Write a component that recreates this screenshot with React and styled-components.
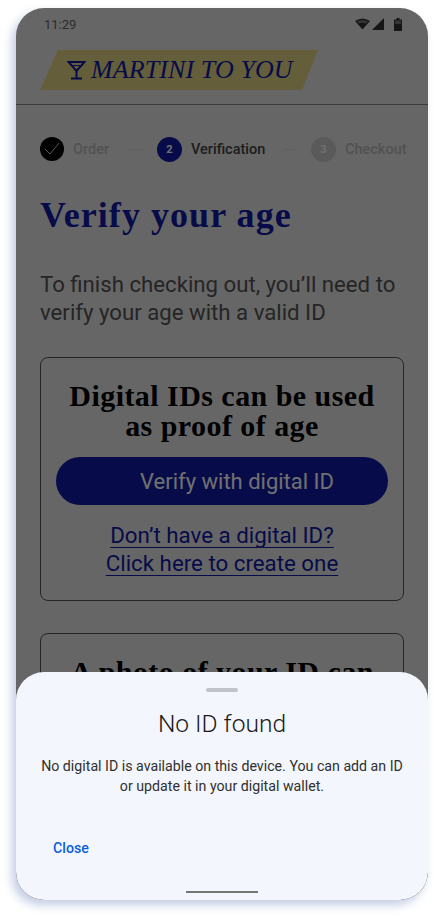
import React from 'react';
import styled, { createGlobalStyle } from 'styled-components';

const navy = '#101aa6';

const Global = createGlobalStyle`
  html, body { margin: 0; padding: 0; background: #fff; }
  body { font-family: Roboto, "Noto Sans", sans-serif; }
`;
const Page = styled.div`
  width: 436px;
  height: 916px;
  padding: 8px 0 0 16px;
  box-sizing: border-box;
  overflow: hidden;
`;
const Phone = styled.div`
  position: relative;
  width: 412px;
  height: 892px;
  border-radius: 28px;
  box-shadow: -4px 5px 10px rgba(70, 100, 170, 0.32);
`;
const Screen = styled.div`
  position: relative;
  width: 100%;
  height: 100%;
  border-radius: 28px;
  overflow: hidden;
  background: #e8e8e8;
`;
const StatusBar = styled.div`
  display: flex;
  align-items: center;
  justify-content: space-between;
  height: 32px;
  padding: 0 26px 0 28px;
  font-size: 13px;
  color: #666;
`;
const StatusIcons = styled.div`
  display: flex;
  align-items: center;
  gap: 2px;
`;
const BatteryIcon = styled.svg`
  margin-left: 8px;
`;
const Header = styled.header`
  height: 65px;
  padding: 10px 0 0 24px;
  box-sizing: border-box;
  border-bottom: 1px solid #8a8a8a;
`;
const Banner = styled.div`
  display: flex;
  align-items: center;
  gap: 5px;
  width: 278px;
  height: 40px;
  padding-left: 27px;
  box-sizing: border-box;
  background: #e3d584;
  clip-path: polygon(18px 0, 100% 0, 262px 100%, 0 100%);
`;
const BrandName = styled.span`
  font-family: "Liberation Serif", serif;
  font-style: italic;
  font-size: 26px;
  letter-spacing: 0.1px;
  color: ${navy};
  white-space: nowrap;
`;
const Steps = styled.div`
  display: flex;
  align-items: center;
  height: 26px;
  margin: 31px 0 0 24px;
`;
const StepCircle = styled.div`
  display: flex;
  align-items: center;
  justify-content: center;
  flex: none;
  width: ${(p) => p.$size || 25}px;
  height: ${(p) => p.$size || 25}px;
  border-radius: 50%;
  margin-right: 9px;
  font-size: 11px;
  font-weight: 700;
  color: #fff;
  background: ${(p) => p.$bg};
`;
const StepLabel = styled.span`
  flex: none;
  width: ${(p) => p.$w}px;
  font-size: 14.5px;
  font-weight: 500;
  color: ${(p) => p.$color};
  white-space: nowrap;
`;
const StepDash = styled.div`
  flex: none;
  width: 13px;
  height: 1px;
  background: #d8d8d8;
  margin-right: 15px;
`;
const Content = styled.main`
  padding: 0 24px;
`;
const Title = styled.h1`
  margin: 33px 0 0;
  font-family: "Liberation Serif", serif;
  font-weight: 700;
  font-size: 36px;
  line-height: 40px;
  letter-spacing: 1.05px;
  color: ${navy};
`;
const Lead = styled.p`
  margin: 35px 0 0;
  font-size: 22.2px;
  line-height: 28px;
  color: #555;
`;
const Card = styled.section`
  border: 1px solid #555;
  border-radius: 8px;
  padding: 23px 15px 0;
  margin-top: ${(p) => p.$mt}px;
  height: ${(p) => p.$h}px;
  box-sizing: border-box;
  text-align: center;
`;
const CardTitle = styled.h2`
  margin: 0;
  font-family: "Liberation Serif", serif;
  font-weight: 700;
  font-size: 30px;
  line-height: 30px;
  letter-spacing: 0.45px;
  color: #000;
`;
const VerifyButton = styled.button`
  display: block;
  width: 332px;
  height: 48px;
  margin: 16px 0 0;
  padding: 0 0 0 30px;
  border: none;
  border-radius: 24px;
  background: ${navy};
  color: #fff;
  font-family: Roboto, sans-serif;
  font-size: 22px;
`;
const LinkBlock = styled.div`
  margin-top: 16px;
  font-size: 22.3px;
  line-height: 28px;
`;
const CardLink = styled.a`
  color: ${navy};
  text-decoration: underline;
  text-underline-offset: 4px;
  text-decoration-thickness: 1px;
`;
const Scrim = styled.div`
  position: absolute;
  inset: 0;
  background: rgba(0, 0, 0, 0.56);
`;
const Sheet = styled.div`
  position: absolute;
  left: 0;
  right: 0;
  bottom: 0;
  height: 228px;
  padding-top: 16px;
  box-sizing: border-box;
  background: #f3f6fd;
  border-radius: 28px;
  display: flex;
  flex-direction: column;
  align-items: center;
`;
const Handle = styled.div`
  width: 32px;
  height: 4px;
  border-radius: 2px;
  background: #c0c3c8;
`;
const SheetTitle = styled.h3`
  margin: 16px 0 0;
  font-weight: 300;
  font-size: 24.5px;
  line-height: 32px;
  color: #1a1a1a;
`;
const SheetBody = styled.p`
  margin: 16px 0 0;
  width: 372px;
  font-size: 14.2px;
  line-height: 20px;
  text-align: center;
  color: #303030;
`;
const CloseButton = styled.button`
  align-self: flex-start;
  margin: 42px 0 0 37px;
  padding: 0;
  border: none;
  background: none;
  font-family: Roboto, sans-serif;
  font-size: 14.2px;
  font-weight: 500;
  line-height: 20px;
  color: #0b5fe0;
`;
const HomeBar = styled.div`
  position: absolute;
  left: 170px;
  bottom: 7px;
  width: 72px;
  height: 2px;
  background: #757575;
`;

export default function App() {
  return (
    <Page>
      <Global />
      <Phone>
        <Screen>
          <StatusBar>
            <span>11:29</span>
            <StatusIcons>
              <svg width="15" height="12" viewBox="0 0 15 12">
                <path d="M0 3 Q7.5 -2 15 3 L7.5 11.5 Z" fill="#333" />
                <path d="M2 3.6 Q7.5 0.4 13 3.6 L11 5.6 Q7.5 3.8 4 5.6 Z" fill="#777" />
              </svg>
              <svg width="12" height="12" viewBox="0 0 12 12">
                <path d="M12 0 V12 H0 Z" fill="#333" />
              </svg>
              <BatteryIcon width="8" height="13" viewBox="0 0 8 13">
                <path d="M2.5 0 H5.5 V1.5 H8 V13 H0 V1.5 H2.5 Z" fill="#333" />
                <rect x="1" y="2.5" width="6" height="3.5" fill="#777" />
              </BatteryIcon>
            </StatusIcons>
          </StatusBar>
          <Header>
            <Banner>
              <svg width="19" height="20" viewBox="0 0 19 20" fill="none" stroke={navy} strokeWidth="2">
                <path d="M1.5 2 H17.5 L9.5 11 Z" />
                <path d="M9.5 11 V18 M4 18.5 H15" />
                <path d="M4 5.5 H15" strokeWidth="1" />
              </svg>
              <BrandName>MARTINI TO YOU</BrandName>
            </Banner>
          </Header>
          <Steps>
            <StepCircle $bg="#000" $size={24}>
              <svg width="16" height="14" viewBox="0 0 16 14" fill="none" stroke="#ccc" strokeWidth="1">
                <path d="M1 7 L6 12 L15 1" />
              </svg>
            </StepCircle>
            <StepLabel $w={56} $color="#bbb">Order</StepLabel>
            <StepDash />
            <StepCircle $bg={navy}>2</StepCircle>
            <StepLabel $w={92} $color="#444">Verification</StepLabel>
            <StepDash />
            <StepCircle $bg="#ccc">3</StepCircle>
            <StepLabel $w={60} $color="#bbb">Checkout</StepLabel>
          </Steps>
          <Content>
            <Title>Verify your age</Title>
            <Lead>
              To finish checking out, you’ll need to
              <br />
              verify your age with a valid ID
            </Lead>
            <Card $mt={31} $h={244}>
              <CardTitle>
                Digital IDs can be used
                <br />
                as proof of age
              </CardTitle>
              <VerifyButton>Verify with digital ID</VerifyButton>
              <LinkBlock>
                <CardLink>Don’t have a digital ID?</CardLink>
                <br />
                <CardLink>Click here to create one</CardLink>
              </LinkBlock>
            </Card>
            <Card $mt={32} $h={200}>
              <CardTitle>A photo of your ID can</CardTitle>
            </Card>
          </Content>
          <Scrim />
          <Sheet>
            <Handle />
            <SheetTitle>No ID found</SheetTitle>
            <SheetBody>
              No digital ID is available on this device. You can add an ID or update it in your digital wallet.
            </SheetBody>
            <CloseButton>Close</CloseButton>
            <HomeBar />
          </Sheet>
        </Screen>
      </Phone>
    </Page>
  );
}
